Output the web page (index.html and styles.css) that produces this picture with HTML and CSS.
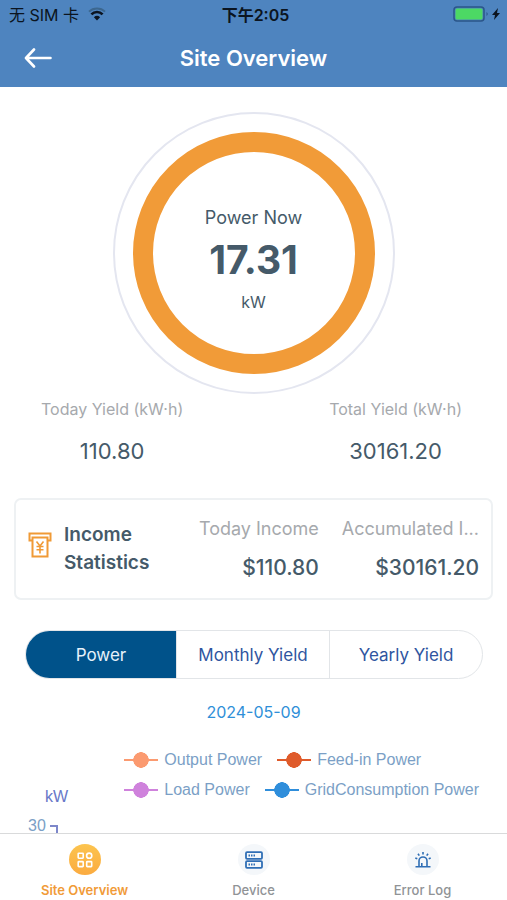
FILE: index.html
```html
<!DOCTYPE html>
<html lang="en">
<head>
    <meta charset="UTF-8">
    <meta name="viewport" content="width=device-width, initial-scale=1.0">
    <title>Site Overview</title>
    <link rel="stylesheet" href="styles.css">
</head>
<body>
    <header>
        <div class="status-bar">
            <div class="carrier">
                <span>无 SIM 卡</span>
                <svg width="18" height="14" viewBox="0 0 18 14" fill="none">
                    <path d="M1 4.6a11.6 11.6 0 0 1 16 0" stroke="#3c678f" stroke-width="2"/>
                    <path d="M3.4 7.3a7.8 7.8 0 0 1 11.2 0" stroke="#0b1420" stroke-width="2.6"/>
                    <path d="M5.9 10.2a4.6 4.6 0 0 1 6.2 0L9 13.4z" fill="#0b1420"/>
                </svg>
            </div>
            <span class="clock">下午2:05</span>
            <div class="battery">
                <svg width="49" height="16" viewBox="0 0 49 16">
                    <rect x="1" y="1" width="30" height="14" rx="3" fill="none" stroke="#2b5689" stroke-width="1.5"/>
                    <rect x="2.5" y="2.5" width="27" height="11" rx="1.5" fill="#4cd964"/>
                    <path d="M33.500 6q2.500 2 0 4z" fill="#2b5689"/>
                    <path d="M45 2l-6 7h3l-1 5 6-7h-3z" fill="#0b1420"/>
                </svg>
            </div>
        </div>
        <nav class="nav-bar">
            <button class="back-btn" aria-label="Back">
                <svg width="28" height="20" viewBox="0 0 28 20" fill="none" stroke="#fff" stroke-width="2.6" stroke-linecap="round" stroke-linejoin="round">
                    <path d="M26.5 10H2.500M10 1.500L2 10l8 8.500"/>
                </svg>
            </button>
            <h1>Site Overview</h1>
        </nav>
    </header>

    <main>
        <section class="gauge">
            <div class="gauge-ring">
                <span class="gauge-label">Power Now</span>
                <strong class="gauge-value">17.31</strong>
                <span class="gauge-unit">kW</span>
            </div>
        </section>

        <section class="yields">
            <div class="yield">
                <span class="yield-label">Today Yield (kW·h)</span>
                <span class="yield-value">110.80</span>
            </div>
            <div class="yield">
                <span class="yield-label">Total Yield (kW·h)</span>
                <span class="yield-value">30161.20</span>
            </div>
        </section>

        <section class="income-card">
            <svg class="income-icon" width="24" height="26" viewBox="0 0 24 26" fill="none" stroke="#f09a36" stroke-width="2">
                <path d="M4.500 8.500H1.500V1.500h21V8.500h-3M4.500 5.500h15V24.500h-15z"/>
                <path d="M8.500 9.500l3.500 4.500 3.500-4.500M12 14V21.500M8.500 14.500h7M8.500 17.800h7" stroke-width="1.600"/>
            </svg>
            <h2>Income Statistics</h2>
            <div class="income">
                <span class="income-label">Today Income</span>
                <span class="income-value">$110.80</span>
            </div>
            <div class="income income-total">
                <span class="income-label">Accumulated I...</span>
                <span class="income-value">$30161.20</span>
            </div>
        </section>

        <div class="period-tabs">
            <button class="active">Power</button>
            <button>Monthly Yield</button>
            <button>Yearly Yield</button>
        </div>

        <button class="date-btn">2024-05-09</button>

        <section class="chart">
            <div class="axis">
                <span class="axis-unit">kW</span>
                <div class="axis-max">
                    <span>30</span>
                    <span class="axis-tick"></span>
                </div>
            </div>
            <div class="legend">
                <div class="legend-row">
                    <span class="legend-item output">Output Power</span>
                    <span class="legend-item feed-in">Feed-in Power</span>
                </div>
                <div class="legend-row">
                    <span class="legend-item load">Load Power</span>
                    <span class="legend-item grid">GridConsumption Power</span>
                </div>
            </div>
        </section>
    </main>

    <footer class="tab-bar">
        <a href="#overview" class="tab active">
            <span class="tab-icon">
                <svg width="16" height="16" viewBox="0 0 16 16" fill="none" stroke="#fff" stroke-width="1.600">
                    <rect x="1.200" y="1.200" width="5" height="5" rx=".6"/>
                    <circle cx="12.200" cy="3.700" r="2.600"/>
                    <rect x="1.200" y="9.600" width="5" height="5" rx=".6"/>
                    <rect x="9.700" y="9.600" width="5" height="5" rx=".6"/>
                </svg>
            </span>
            <span>Site Overview</span>
        </a>
        <a href="#device" class="tab">
            <span class="tab-icon">
                <svg width="18" height="18" viewBox="0 0 18 18" fill="none" stroke="#2f6eb5" stroke-width="1.800">
                    <rect x="1" y="1.200" width="16" height="6.600" rx="1"/>
                    <rect x="1" y="10.200" width="16" height="6.600" rx="1"/>
                    <path d="M3.500 4.500h1.500M6 4.500h1.500M8.500 4.500h1.500M3.500 13.500h1.500M6 13.500h1.500M8.500 13.500h1.500" stroke-width="2"/>
                </svg>
            </span>
            <span>Device</span>
        </a>
        <a href="#errors" class="tab">
            <span class="tab-icon">
                <svg width="16" height="16" viewBox="0 0 16 16" fill="none" stroke="#2f6eb5" stroke-width="1.600">
                    <path d="M.5 14.800h15M4 14.800V9a4 4 0 0 1 8 0v5.800M6.800 11v3.500"/>
                    <path d="M8 0v2.600M3 1.700l1.300 1.900M13 1.700l-1.300 1.900M.3 6l2 .8M15.700 6l-2 .8"/>
                </svg>
            </span>
            <span>Error Log</span>
        </a>
    </footer>
</body>
</html>
```
FILE: styles.css
```css
:root {
    --header-bg: #4e84bf; --orange: #f19b38; --text-color: #455a69;
    --muted: #a6a9ad; --border-color: #eef1f3; --link: #2f8fd8;
    --tab-blue: #00528a; --legend-text: #7b9fc6;
}
* { box-sizing: border-box; }
body {
    margin: 0; height: 100vh; display: flex; flex-direction: column;
    font-family: Inter, "Noto Sans CJK SC", sans-serif; font-size: 16px;
    color: var(--text-color); background-color: #fff;
}
button { font: inherit; border: none; background: none; padding: 0; cursor: pointer; }
h1, h2 { margin: 0; }

header { background-color: var(--header-bg); flex-shrink: 0; }
.status-bar {
    display: grid; grid-template-columns: 1fr auto 1fr; align-items: center;
    height: 28px; padding: 0 5px 0 9px; font-size: 16px; color: #0b1420;
}
.carrier { display: flex; align-items: center; gap: 9px; }
.clock { font-weight: 600; }
.battery { display: flex; justify-content: flex-end; }
.nav-bar {
    display: grid; grid-template-columns: 28px 1fr 28px; align-items: center;
    height: 59px; padding: 0 24px;
}
.back-btn { display: flex; }
.nav-bar h1 { font-size: 22px; font-weight: 600; color: #fff; text-align: center; }

main { flex: 1; min-height: 0; overflow: hidden; }

.gauge {
    width: 282px; height: 282px; margin: 25px auto 0; padding: 18px;
    border: 2px solid #e4e6f0; border-radius: 50%;
}
.gauge-ring {
    height: 100%; display: flex; flex-direction: column; align-items: center; justify-content: center;
    padding-top: 13px; border: 20px solid var(--orange); border-radius: 50%;
}
.gauge-label { font-size: 18px; line-height: 24px; }
.gauge-value { font-size: 39px; line-height: 60px; }
.gauge-unit { line-height: 24px; }

.yields { display: flex; justify-content: space-between; padding: 4px 45px 0 41px; }
.yield { display: flex; flex-direction: column; align-items: center; }
.yield-label { line-height: 22px; color: var(--muted); }
.yield-value { font-size: 22px; line-height: 30px; margin-top: 16px; }

.income-card {
    display: flex; align-items: center; margin: 32px 14px 0; padding: 16px 12px;
    border: 2px solid var(--border-color); border-radius: 7px;
}
.income-icon { flex-shrink: 0; margin-bottom: 8px; }
.income-card h2 { flex: 1; margin-left: 12px; font-size: 19px; font-weight: 600; line-height: 28px; }
.income { display: flex; flex-direction: column; text-align: right; }
.income-total { margin-left: 23px; }
.income-label { font-size: 18px; line-height: 26px; color: var(--muted); white-space: nowrap; }
.income-value { font-size: 21px; font-weight: 500; line-height: 28px; margin-top: 12px; }

.period-tabs {
    display: grid; grid-template-columns: 150fr 153fr 153fr; height: 49px; margin: 30px 24px 0 25px;
    border: 1px solid #e2e5e8; border-radius: 25px; overflow: hidden;
}
.period-tabs button { font-size: 17px; color: #2f55a0; }
.period-tabs button + button { border-left: 1px solid #e2e5e8; }
.period-tabs .active { background-color: var(--tab-blue); color: #e6f1fa; }

.date-btn { display: block; margin: 21px auto 0; line-height: 24px; color: var(--link); }

.chart {
    display: flex; justify-content: space-between; padding: 21px 28px 0;
    font-family: "Liberation Sans", Arial, sans-serif; color: var(--legend-text);
}
.axis { padding-top: 42px; }
.axis-unit { display: block; padding-left: 17px; line-height: 20px; color: #6878c8; }
.axis-max { display: flex; gap: 4px; margin-top: 9px; line-height: 20px; }
.axis-tick {
    width: 8px; height: 20px; margin-top: 9px;
    border-top: 2px solid #7d87ca; border-right: 2px solid #7d87ca;
}
.legend-row { display: flex; gap: 15px; height: 30px; }
.legend-item { display: flex; align-items: center; gap: 6px; white-space: nowrap; line-height: 30px; }
.legend-item::before {
    content: ""; width: 34px; height: 16px;
    background:
        radial-gradient(circle closest-side, var(--series) 94%, transparent) center / 16px 16px no-repeat,
        linear-gradient(var(--series), var(--series)) center / 100% 2px no-repeat;
}
.output { --series: #fb9a70; }
.feed-in { --series: #df5b2b; }
.load { --series: #cf82dc; }
.grid { --series: #2f8edb; }

.tab-bar {
    display: grid; grid-template-columns: 1fr 1fr 1fr; flex-shrink: 0;
    padding-bottom: 1px; border-top: 1px solid #d9dadb;
}
.tab {
    display: flex; flex-direction: column; align-items: center; height: 65px; padding-top: 10px;
    gap: 6px; color: #909396; font-size: 13px; font-weight: 500; line-height: 18px; text-decoration: none;
}
.tab-icon {
    display: flex; align-items: center; justify-content: center;
    width: 32px; height: 32px; border-radius: 50%; background-color: #f4f7fa;
}
.tab.active { color: var(--orange); font-weight: 600; }
.tab.active .tab-icon { background: linear-gradient(#fcc44f, #fbab40); }
```
